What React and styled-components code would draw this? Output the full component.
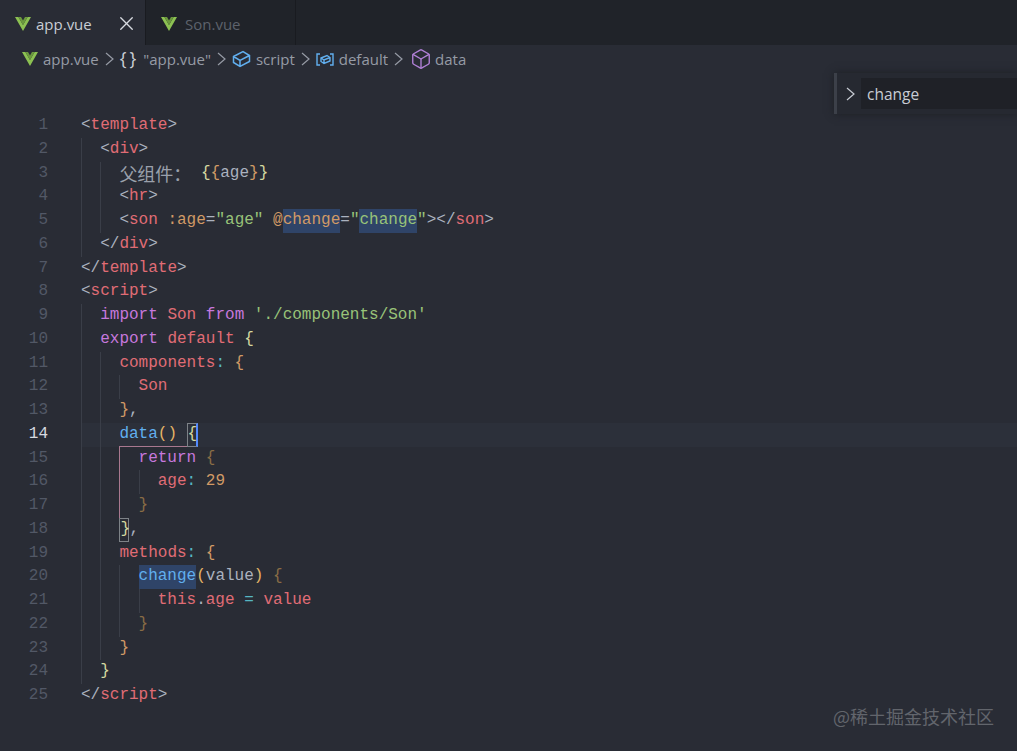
import React from "react";
import styled, { createGlobalStyle } from "styled-components";
import { Box, X } from "lucide-react";

const colors = {
  red: "#e06c75",
  purple: "#c678dd",
  green: "#98c379",
  blue: "#61afef",
  orange: "#d19a66",
  cyan: "#56b6c2",
  gray: "#abb2bf",
  yellow: "#e5b567",
  pale: "#d5d9a0",
  brown: "#8a6d45",
};

const GlobalStyle = createGlobalStyle`
  html, body {
    margin: 0;
    padding: 0;
    background: #292c35;
  }
`;

const Page = styled.div`
  position: relative;
  width: 1017px;
  height: 751px;
  overflow: hidden;
  background: #292c35;
  font-family: "Open Sans", "Liberation Sans", sans-serif;
`;

const TabBar = styled.div`
  display: flex;
  height: 45px;
  background: #202329;
`;

const Tab = styled.div`
  display: flex;
  align-items: center;
  box-sizing: border-box;
  width: ${(p) => (p.$active ? "146px" : "150px")};
  padding: 2px 7px 0 15px;
  gap: ${(p) => (p.$active ? "5px" : "8px")};
  font-size: 15px;
  color: ${(p) => (p.$active ? "#c8ccd4" : "#5d626c")};
  background: ${(p) => (p.$active ? "#292c35" : "#202329")};
  border-right: 1px solid #191b20;
  svg.close {
    margin-left: auto;
    color: #d7dae0;
  }
`;

const Crumbs = styled.div`
  display: flex;
  align-items: center;
  height: 28px;
  padding-left: 22px;
  font-size: 15px;
  color: #969ba5;
`;

const Crumb = styled.span`
  display: flex;
  align-items: center;
  gap: 5px;
`;

const Glyph = styled.svg`
  flex: none;
  width: 9px;
  height: 14px;
  fill: none;
  stroke: ${(p) => p.$stroke || "#969ba5"};
  stroke-width: 1.2;
`;

const Separator = styled.span`
  display: flex;
  margin: 0 6px;
`;

const Braces = styled.span`
  font-size: 18px;
  line-height: 18px;
  color: #ccd0d6;
  letter-spacing: 3px;
  margin: -2px -1px 0 0;
`;

const ScriptCube = styled.svg`
  flex: none;
  width: 19px;
  height: 18px;
  fill: none;
  stroke: #61afef;
  stroke-width: 1.5;
`;

const DataCube = styled(Box)`
  flex: none;
  margin: 0 -2px 0 1px;
`;

const FindWidget = styled.div`
  position: absolute;
  top: 73px;
  right: 0;
  display: flex;
  align-items: center;
  box-sizing: border-box;
  width: 183px;
  height: 41px;
  padding-left: 9px;
  gap: 6px;
  border-left: 3px solid #3c4049;
  background: #262931;
  box-shadow: 0 0 8px #1d1f25;
  color: #c8ccd4;
  font-size: 15.5px;
`;

const FindInput = styled.div`
  flex: 1;
  height: 31px;
  line-height: 33px;
  padding-left: 6px;
  background: #1f2127;
`;

const Editor = styled.div`
  padding-top: 41px;
  font-family: "Liberation Mono", monospace;
  font-size: 16px;
  color: ${colors.gray};
`;

const Row = styled.div`
  display: flex;
  height: 23.75px;
  line-height: 23.75px;
  white-space: pre;
`;

const LineNo = styled.span`
  flex: none;
  box-sizing: border-box;
  width: 81px;
  padding-right: 33px;
  text-align: right;
  color: ${(p) => (p.$current ? "#d7dae0" : "#525866")};
`;

const Code = styled.div`
  position: relative;
  flex: 1;
  display: flex;
  background: ${(p) => (p.$current ? "#2c303a" : "transparent")};
`;

const Indent = styled.span`
  flex: none;
  box-sizing: border-box;
  width: 19.2px;
  border-left: 1px solid ${(p) => (p.$active ? "#a9788f" : "#3a3e48")};
`;

const Token = styled.span`
  color: ${(p) => colors[p.$c] || colors.gray};
  background: ${(p) => (p.$sel ? "#2f4468" : "transparent")};
`;

const Cjk = styled.span`
  font-family: "Noto Sans CJK SC", sans-serif;
  font-size: 18px;
  color: #9aa0ab;
`;

const MatchBracket = styled.span`
  box-sizing: border-box;
  display: inline-block;
  width: 10px;
  height: 23.75px;
  border: 1px solid #7d8287;
  color: ${colors.pale};
  line-height: 21px;
  ${(p) => p.$cursor && "border-right: 2px solid #528bff; width: 11px;"}
`;

const BracketRule = styled.span`
  position: absolute;
  left: 38px;
  bottom: 0;
  width: 68px;
  height: 1px;
  background: #a9788f;
`;

const Watermark = styled.div`
  position: absolute;
  right: 23px;
  bottom: 22px;
  font-family: "Noto Sans CJK SC", sans-serif;
  font-size: 18px;
  color: #62656c;
`;

function VueIcon() {
  return (
    <svg width="16" height="14" viewBox="0 0 16 14">
      <polygon points="0,0 3.4,0 8,8 12.6,0 16,0 8,14" fill="#8cc152" />
      <polygon points="3.4,0 6,0 8,3.6 10,0 12.6,0 8,8" fill="#6c9a3e" />
    </svg>
  );
}

function Chevron({ stroke }) {
  return (
    <Glyph viewBox="0 0 9 14" $stroke={stroke}>
      <path d="M1 1l7 6-7 6" />
    </Glyph>
  );
}

function VariableIcon() {
  return (
    <svg width="18" height="13" viewBox="0 0 18 13" fill="none" stroke="#61afef" strokeWidth="1.4">
      <path d="M4 1H1v11h3M14 1h3v11h-3" />
      <path d="M5 5l6-2.5 3 2v3.5l-6 2.5-3-2zM5 5l3 2 6-2.5M8 7v3.5" />
    </svg>
  );
}

const t = (text, c, extra) => ({ text, c, ...extra });

const lines = [
  { guides: 0, tokens: [t("<"), t("template", "red"), t(">")] },
  { guides: 1, tokens: [t("<"), t("div", "red"), t(">")] },
  { guides: 2, tokens: [t("父组件：", null, { cjk: true }), t(" "), t("{", "pale"), t("{", "orange"), t("age"), t("}", "orange"), t("}", "pale")] },
  { guides: 2, tokens: [t("<"), t("hr", "red"), t(">")] },
  { guides: 2, tokens: [t("<"), t("son", "red"), t(" "), t(":age", "orange"), t("="), t('"age"', "green"), t(" "), t("@", "orange"), t("change", "orange", { sel: true }), t("="), t('"', "green"), t("change", "green", { sel: true }), t('"', "green"), t(">"), t("</"), t("son", "red"), t(">")] },
  { guides: 1, tokens: [t("</"), t("div", "red"), t(">")] },
  { guides: 0, tokens: [t("</"), t("template", "red"), t(">")] },
  { guides: 0, tokens: [t("<"), t("script", "red"), t(">")] },
  { guides: 1, tokens: [t("import", "purple"), t(" "), t("Son", "red"), t(" "), t("from", "purple"), t(" "), t("'./components/Son'", "green")] },
  { guides: 1, tokens: [t("export", "purple"), t(" "), t("default", "red"), t(" "), t("{", "pale")] },
  { guides: 2, tokens: [t("components", "red"), t(":", "cyan"), t(" "), t("{", "orange")] },
  { guides: 3, tokens: [t("Son", "red")] },
  { guides: 2, tokens: [t("}", "orange"), t(",")] },
  { guides: 2, current: true, rule: true, tokens: [t("data", "blue"), t("(", "yellow"), t(")", "yellow"), t(" "), t("{", "pale", { match: true, cursor: true })] },
  { guides: 3, active: 2, tokens: [t("return", "purple"), t(" "), t("{", "brown")] },
  { guides: 4, active: 2, tokens: [t("age", "red"), t(":", "cyan"), t(" "), t("29", "orange")] },
  { guides: 3, active: 2, tokens: [t("}", "brown")] },
  { guides: 2, tokens: [t("}", "pale", { match: true }), t(",")] },
  { guides: 2, tokens: [t("methods", "red"), t(":", "cyan"), t(" "), t("{", "orange")] },
  { guides: 3, tokens: [t("change", "blue", { sel: true }), t("(", "yellow"), t("value"), t(")", "yellow"), t(" "), t("{", "brown")] },
  { guides: 4, tokens: [t("this", "red"), t("."), t("age", "red"), t(" "), t("=", "cyan"), t(" "), t("value", "red")] },
  { guides: 3, tokens: [t("}", "brown")] },
  { guides: 2, tokens: [t("}", "orange")] },
  { guides: 1, tokens: [t("}", "pale")] },
  { guides: 0, tokens: [t("</"), t("script", "red"), t(">")] },
];

function renderToken(tok, i) {
  if (tok.match) {
    return <MatchBracket key={i} $cursor={tok.cursor}>{tok.text}</MatchBracket>;
  }
  if (tok.cjk) {
    return <Cjk key={i}>{tok.text}</Cjk>;
  }
  return (
    <Token key={i} $c={tok.c} $sel={tok.sel}>
      {tok.text}
    </Token>
  );
}

function CodeLine({ line, number }) {
  return (
    <Row>
      <LineNo $current={line.current}>{number}</LineNo>
      <Code $current={line.current}>
        {Array.from({ length: line.guides }, (_, i) => (
          <Indent key={i} $active={line.active === i} />
        ))}
        {line.tokens.map(renderToken)}
        {line.rule && <BracketRule />}
      </Code>
    </Row>
  );
}

export default function App() {
  return (
    <Page>
      <GlobalStyle />
      <TabBar>
        <Tab $active>
          <VueIcon />
          <span>app.vue</span>
          <X className="close" size={23} strokeWidth={1.4} />
        </Tab>
        <Tab>
          <VueIcon />
          <span>Son.vue</span>
        </Tab>
      </TabBar>
      <Crumbs>
        <Crumb>
          <VueIcon />
          app.vue
        </Crumb>
        <Separator>
          <Chevron />
        </Separator>
        <Crumb>
          <Braces>{"{}"}</Braces>
          "app.vue"
        </Crumb>
        <Separator>
          <Chevron />
        </Separator>
        <Crumb>
          <ScriptCube viewBox="0 0 19 18">
            <path d="M1.5 6.5L11 1.5l6.5 4v6L8 16.5l-6.5-4zM1.5 6.5L8 10.5l9.5-5M8 10.5v6" />
          </ScriptCube>
          script
        </Crumb>
        <Separator>
          <Chevron />
        </Separator>
        <Crumb>
          <VariableIcon />
          default
        </Crumb>
        <Separator>
          <Chevron />
        </Separator>
        <Crumb>
          <DataCube size={22} color="#b180d7" strokeWidth={1.5} />
          data
        </Crumb>
      </Crumbs>
      <Editor>
        {lines.map((line, i) => (
          <CodeLine key={i} line={line} number={i + 1} />
        ))}
      </Editor>
      <FindWidget>
        <Chevron stroke="#c8ccd4" />
        <FindInput>change</FindInput>
      </FindWidget>
      <Watermark>@稀土掘金技术社区</Watermark>
    </Page>
  );
}
